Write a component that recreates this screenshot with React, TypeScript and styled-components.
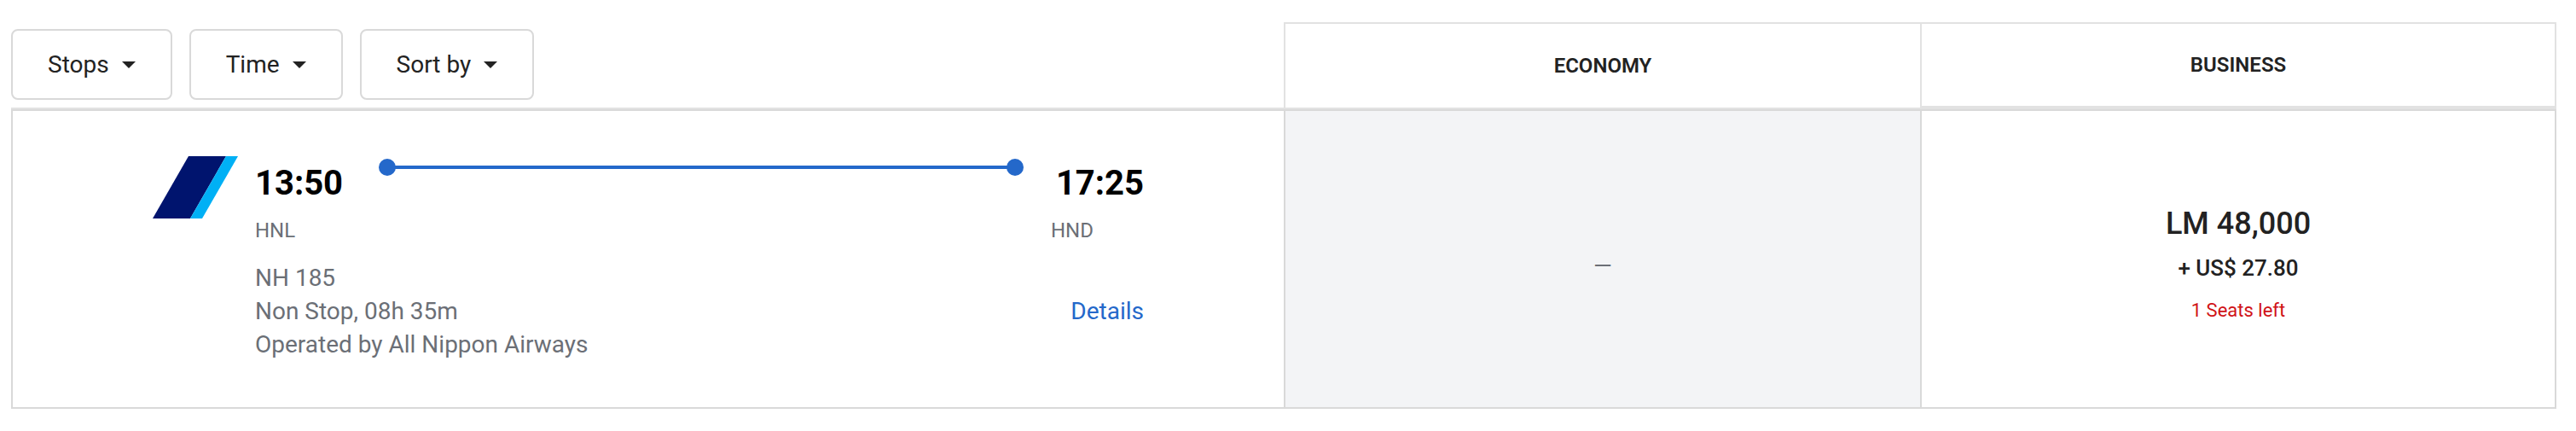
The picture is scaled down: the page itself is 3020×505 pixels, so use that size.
import React from "react";
import styled, { createGlobalStyle } from "styled-components";

const GlobalStyle = createGlobalStyle`
  *, *::before, *::after { box-sizing: border-box; }
  body {
    margin: 0;
    background: #ffffff;
    color: #222222;
    font-family: Roboto, "Liberation Sans", sans-serif;
    font-size: 28px;
  }
`;

const headLine = "#e2e2e2";
const bodyLine = "#d9d9d9";

const Page = styled.main`
  padding: 26px 23px 26px 13px;
`;

const ResultsTable = styled.table`
  width: 100%;
  table-layout: fixed;
  border-collapse: separate;
  border-spacing: 0;
`;

const Column = styled.col<{ $share: number }>`
  width: ${(p) => p.$share}%;
`;

const FilterCell = styled.td`
  padding: 8px 0 9px;
  border-bottom: 2px solid ${headLine};
  vertical-align: top;
`;

const FilterBar = styled.div`
  display: flex;
  gap: 20px;
`;

const FilterButton = styled.button`
  display: flex;
  align-items: center;
  gap: 15px;
  height: 83px;
  padding: 0 41px;
  border: 2px solid ${bodyLine};
  border-radius: 8px;
  background: #ffffff;
  color: #222222;
  font: inherit;
  cursor: pointer;
`;

const Caret = styled.span`
  border: 8px solid transparent;
  border-top-color: #222222;
  border-bottom: 0;
`;

const CabinHeader = styled.th<{ $active?: boolean }>`
  padding: 0;
  border: 2px solid ${headLine};
  border-right-width: 0;
  border-bottom-width: ${(p) => (p.$active ? 4 : 2)}px;
  font-size: 24px;
  font-weight: 600;
  text-transform: uppercase;

  &:last-child {
    border-right-width: 2px;
  }
`;

const Cell = styled.td`
  border: 2px solid ${bodyLine};
  border-right-width: 0;

  &:last-child {
    border-right-width: 2px;
  }
`;

const FlightCell = styled(Cell)`
  padding: 53px 164px 54px;
`;

const Flight = styled.div`
  display: flex;
  align-items: flex-start;
  gap: 20px;
`;

const AirlineLogo = styled.svg`
  flex: none;
  width: 100px;
  height: 73px;
`;

const Itinerary = styled.div`
  flex: 1;
  display: flex;
  flex-direction: column;
  gap: 20px;
`;

const Leg = styled.div`
  display: grid;
  grid-template-columns: 113px 1fr 109px;
  column-gap: 32px;
`;

const Stop = styled.div`
  display: flex;
  flex-direction: column;
  gap: 15px;
  padding-top: 8px;
`;

const Time = styled.time<{ $end?: boolean }>`
  color: #000000;
  font-size: 40px;
  font-weight: 700;
  line-height: 48px;
  text-align: ${(p) => (p.$end ? "right" : "left")};
`;

const Airport = styled.span`
  color: #6b6f76;
  font-size: 24px;
  line-height: 32px;
`;

const RouteLine = styled.div`
  display: flex;
  align-items: center;
  height: 20px;
  margin-top: 3px;
  color: #2468ca;
`;

const Dot = styled.span`
  flex: none;
  width: 20px;
  height: 20px;
  border-radius: 50%;
  background: currentColor;
`;

const Track = styled.span`
  flex: 1;
  height: 4px;
  margin: 0 -1px;
  background: currentColor;
`;

const Summary = styled.div`
  display: flex;
  align-items: center;
  justify-content: space-between;
  line-height: 39px;
`;

const FlightInfo = styled.ul`
  margin: 0;
  padding: 0;
  list-style: none;
  color: #6b6f76;
`;

const DetailsLink = styled.a`
  color: #2468ca;
  text-decoration: none;
`;

const FareCell = styled(Cell)<{ $unavailable?: boolean }>`
  padding: 16px 0 0;
  background: ${(p) => (p.$unavailable ? "#f3f4f6" : "#ffffff")};
  color: ${(p) => (p.$unavailable ? "#6b6f76" : "#222222")};
  text-align: center;
  line-height: 50px;
`;

const Miles = styled.div`
  font-size: 36px;
  font-weight: 500;
  line-height: 54px;
`;

const Taxes = styled.div`
  font-size: 26px;
  font-weight: 500;
`;

const SeatsLeft = styled.div`
  color: #d01216;
  font-size: 22px;
`;

const filters = ["Stops", "Time", "Sort by"];

export default function App() {
  return (
    <>
      <GlobalStyle />
      <Page>
        <ResultsTable>
          <colgroup>
            <Column $share={50} />
            <Column $share={25} />
            <Column $share={25} />
          </colgroup>
          <thead>
            <tr>
              <FilterCell>
                <FilterBar>
                  {filters.map((name) => (
                    <FilterButton key={name} type="button" aria-haspopup="true">
                      {name}
                      <Caret />
                    </FilterButton>
                  ))}
                </FilterBar>
              </FilterCell>
              <CabinHeader scope="col">Economy</CabinHeader>
              <CabinHeader scope="col" $active>
                Business
              </CabinHeader>
            </tr>
          </thead>
          <tbody>
            <tr>
              <FlightCell>
                <Flight>
                  <AirlineLogo viewBox="0 0 100 73" aria-hidden="true">
                    <path d="M42 0H86L44 73H0Z" fill="#00146e" />
                    <path d="M86 0H100L58 73H44Z" fill="#00b0f5" />
                  </AirlineLogo>
                  <Itinerary>
                    <Leg>
                      <Stop>
                        <Time>13:50</Time>
                        <Airport>HNL</Airport>
                      </Stop>
                      <RouteLine>
                        <Dot />
                        <Track />
                        <Dot />
                      </RouteLine>
                      <Stop>
                        <Time $end>17:25</Time>
                        <Airport>HND</Airport>
                      </Stop>
                    </Leg>
                    <Summary>
                      <FlightInfo>
                        <li>NH 185</li>
                        <li>Non Stop, 08h 35m</li>
                        <li>Operated by All Nippon Airways</li>
                      </FlightInfo>
                      <DetailsLink href="#details">Details</DetailsLink>
                    </Summary>
                  </Itinerary>
                </Flight>
              </FlightCell>
              <FareCell $unavailable>—</FareCell>
              <FareCell>
                <Miles>LM 48,000</Miles>
                <Taxes>+ US$ 27.80</Taxes>
                <SeatsLeft>1 Seats left</SeatsLeft>
              </FareCell>
            </tr>
          </tbody>
        </ResultsTable>
      </Page>
    </>
  );
}
